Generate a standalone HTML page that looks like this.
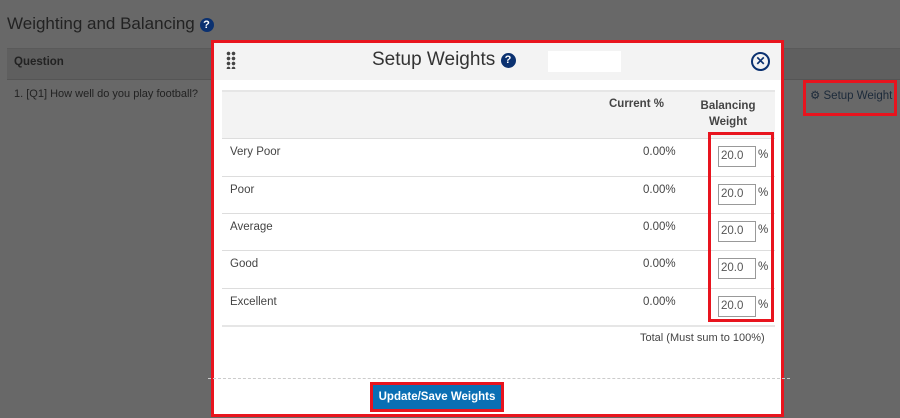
<!DOCTYPE html>
<html><head><style>
*{box-sizing:border-box;margin:0;padding:0}
body{width:900px;height:418px;overflow:hidden;background:#686868;font-family:"Liberation Sans",sans-serif;position:relative;color:#333}
.a{position:absolute}
.q{display:inline-block;width:15px;height:15px;border-radius:50%;background:#0b3170;color:#fff;font-weight:bold;font-size:11px;text-align:center;line-height:15px}
.row{position:absolute;left:222px;width:553px;height:37px;border-top:1px solid #ddd;font-size:11.5px;color:#444}
.row .l{position:absolute;left:8px;top:7px}
.row .c{position:absolute;left:421px;top:7px}
.row .i{position:absolute;left:496px;top:7px;width:38px;height:21px;border:1px solid #999;font-size:11.5px;padding:3px 2px;color:#555;background:#fff}
.row .p{position:absolute;left:536px;top:10px}
</style></head><body>
<div class="a" style="left:7px;top:14px;font-size:17px;color:#222">Weighting and Balancing <span class="q" style="width:14px;height:14px;line-height:14px;position:relative;top:-1px">?</span></div>
<div class="a" style="left:7px;top:48px;width:893px;height:32px;background:#5f5f5f;border-top:1px solid #5a5a5a;border-bottom:1px solid #555"></div>
<div class="a" style="left:14px;top:56px;font-size:11.5px;font-weight:bold;color:#222">Question</div>
<div class="a" style="left:14px;top:88px;font-size:11px;color:#222">1. [Q1] How well do you play football?</div>
<div class="a" style="left:803px;top:80px;width:94px;height:36px;border:3px solid #e8141e"></div>
<div class="a" style="left:810px;top:88px;font-size:11.5px;color:#1c2a3a">⚙ Setup Weight</div>

<div class="a" style="left:211px;top:40px;width:573px;height:377px;border:3px solid #e8141e;background:#fff"></div>
<div class="a" style="left:214px;top:43px;width:567px;height:37px;background:#f3f3f3"></div>
<div class="a" style="left:226px;top:51px;width:10px;height:18px;background:radial-gradient(circle,#444 1.6px,transparent 2px) 0 0/5px 5px"></div>
<div class="a" style="left:372px;top:49px;font-size:19px;color:#333">Setup Weights <span class="q" style="position:relative;top:-2px">?</span></div>
<div class="a" style="left:548px;top:51px;width:73px;height:21px;background:#fff"></div>
<div class="a" style="left:751px;top:52px;width:19px;height:19px;border:2px solid #0b3170;border-radius:50%;color:#0b3170;font-size:12px;font-weight:bold;text-align:center;line-height:15px">✕</div>

<div class="a" style="left:222px;top:90px;width:553px;height:48px;background:#f3f3f3;border-top:2px solid #e6e6e6"></div>
<div class="a" style="left:609px;top:98px;font-size:11.5px;font-weight:bold;color:#444">Current %</div>
<div class="a" style="left:700px;top:98px;width:56px;font-size:11.5px;font-weight:bold;color:#444;text-align:center;line-height:16px">Balancing Weight</div>

<div class="row" style="top:138px"><span class="l">Very Poor</span><span class="c">0.00%</span><span class="i">20.0</span><span class="p">%</span></div>
<div class="row" style="top:176px"><span class="l">Poor</span><span class="c">0.00%</span><span class="i">20.0</span><span class="p">%</span></div>
<div class="row" style="top:213px"><span class="l">Average</span><span class="c">0.00%</span><span class="i">20.0</span><span class="p">%</span></div>
<div class="row" style="top:250px"><span class="l">Good</span><span class="c">0.00%</span><span class="i">20.0</span><span class="p">%</span></div>
<div class="row" style="top:288px"><span class="l">Excellent</span><span class="c">0.00%</span><span class="i">20.0</span><span class="p">%</span></div>
<div class="a" style="left:222px;top:325px;width:553px;border-top:2px solid #e6e6e6"></div>
<div class="a" style="left:708px;top:132px;width:66px;height:190px;border:3px solid #e8141e"></div>
<div class="a" style="left:640px;top:332px;font-size:11px;color:#444">Total (Must sum to 100%)</div>
<div class="a" style="left:208px;top:378px;width:582px;border-top:1px dashed #ccc"></div>
<div class="a" style="left:370px;top:382px;width:134px;height:30px;border:3px solid #e8141e;background:#0a6fb4;color:#fff;font-size:11.5px;font-weight:bold;text-align:center;line-height:24px">Update/Save Weights</div>
</body></html>
